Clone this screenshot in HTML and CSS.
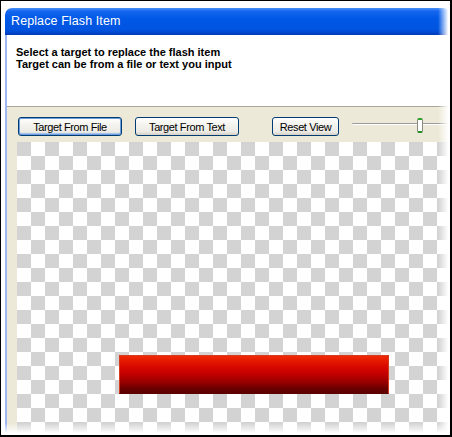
FILE: index.html
```html
<!DOCTYPE html>
<html lang="en">

<head>
    <meta charset="UTF-8">
    <meta name="viewport" content="width=device-width, initial-scale=1.0">
    <title>Replace Flash Item</title>
    <link rel="stylesheet" href="styles.css">
</head>

<body>
    <div class="frame">
        <div class="window">
            <div class="titlebar">Replace Flash Item</div>
            <div class="window-body">
                <div class="header">
                    <p>Select a target to replace the flash item</p>
                    <p>Target can be from a file or text you input</p>
                </div>
                <div class="panel">
                    <div class="toolbar">
                        <button class="btn btn-default">Target From File</button>
                        <button class="btn">Target From Text</button>
                        <button class="btn btn-reset">Reset View</button>
                        <div class="slider">
                            <div class="slider-track"></div>
                            <div class="slider-thumb"></div>
                        </div>
                    </div>
                    <div class="canvas">
                        <div class="flash-item"></div>
                    </div>
                </div>
            </div>
        </div>
        <div class="fade-right"></div>
        <div class="fade-bottom"></div>
    </div>
</body>
</html>
```

FILE: styles.css
```css
body {
    margin: 0;
    padding: 0;
    font-family: "Liberation Sans", Arial, sans-serif;
    background: #fff;
}

.frame {
    position: relative;
    width: 452px;
    height: 437px;
    box-sizing: border-box;
    border-style: solid;
    border-color: #000;
    border-width: 1px 2px 2px 1px;
    padding: 7px 0 0 4px;
    overflow: hidden;
    background: #fff;
}

.window {
    width: 445px;
    height: 427px;
    display: flex;
    flex-direction: column;
}

.titlebar {
    height: 27px;
    box-sizing: border-box;
    padding: 5px 0 0 6px;
    border-radius: 7px 7px 0 0;
    background: linear-gradient(#4a90f7 0, #1466ee 12%, #0058e6 40%, #0054e0 80%, #0046cc 92%, #0038b4 100%);
    color: #fff;
    font-size: 12.5px;
    line-height: 16px;
    letter-spacing: 0.1px;
}

.window-body {
    flex: 1;
    display: flex;
    flex-direction: column;
    border-left: 2px solid #9fb6f2;
}

.header {
    height: 72px;
    box-sizing: border-box;
    padding: 11px 0 0 9px;
    background: #fff;
    border-bottom: 1px solid #aca899;
}

.header p {
    margin: 0;
    font-size: 11px;
    font-weight: bold;
    line-height: 12px;
    color: #000;
}

.panel {
    flex: 1;
    display: flex;
    flex-direction: column;
    background: #ece9d8;
}

.toolbar {
    display: flex;
    align-items: flex-start;
    padding: 10px 0 6px 11px;
}

.btn {
    width: 104px;
    height: 19px;
    padding: 0;
    margin: 0 13px 0 0;
    border: 1px solid #003c74;
    border-radius: 3px;
    background: linear-gradient(#ffffff 0, #f4f3ee 40%, #ecebe6 80%, #d6d0c5 100%);
    font-family: "Liberation Sans", Arial, sans-serif;
    font-size: 11px;
    letter-spacing: -0.4px;
    color: #000;
}

.btn-default {
    box-shadow: inset 0 0 0 1px #6e9fdc, inset 0 -1px 0 1px #a6c2ee;
}

.btn-reset {
    width: 67px;
    margin-left: 20px;
}

.slider {
    position: relative;
    flex: 1;
    height: 19px;
}

.slider-track {
    margin-top: 6px;
    height: 1px;
    background: #9d9c99;
    border-bottom: 1px solid #fff;
    border-radius: 1px;
}

.slider-thumb {
    position: absolute;
    left: 65px;
    top: 1px;
    width: 4px;
    height: 11px;
    border: 1px solid #8c8a80;
    border-radius: 2px;
    background: #fff;
    border-top: 2px solid #2aa52a;
    border-bottom: 2px solid #1e8f1e;
}

.canvas {
    flex: 1;
    margin-left: 10px;
    padding: 213px 0 0 102px;
    background-color: #fff;
    background-image: conic-gradient(#fff 25%, #d3d3d3 0 50%, #fff 0 75%, #d3d3d3 0);
    background-size: 28px 28px;
}

.flash-item {
    width: 270px;
    height: 39px;
    box-sizing: border-box;
    border: 1px solid #d83a20;
    border-bottom-color: #5a0000;
    background: linear-gradient(#ee2a00 0, #dc0c00 25%, #c80000 45%, #9a0000 70%, #6a0000 88%, #5c0000 100%);
}

.fade-right {
    position: absolute;
    top: 0;
    right: 0;
    width: 12px;
    height: 100%;
    background: linear-gradient(to right, rgba(255, 255, 255, 0), #fff 85%);
}

.fade-bottom {
    position: absolute;
    left: 0;
    bottom: 0;
    width: 100%;
    height: 12px;
    background: linear-gradient(rgba(255, 255, 255, 0), #fff 85%);
}
```
